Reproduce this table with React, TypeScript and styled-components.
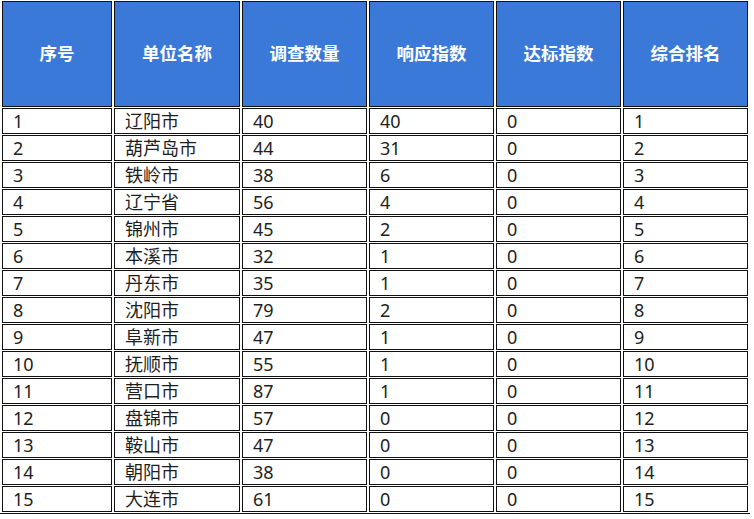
import React, { FC } from 'react';
import styled, { createGlobalStyle } from 'styled-components';

const GlobalStyle = createGlobalStyle`
  html, body {
    margin: 0;
    padding: 0;
    background: #fff;
  }
  body {
    font-family: "Noto Sans", "Noto Sans CJK SC", sans-serif;
  }
`;

const Table = styled.table`
  border-collapse: separate;
  border-spacing: 2px 1px;
  table-layout: fixed;
  width: 750px;
  border-bottom: 1px solid #111;
`;

const HeadCell = styled.th<{ $w: number }>`
  box-sizing: border-box;
  width: ${(p) => p.$w}px;
  height: 106px;
  padding: 0 0 3px;
  background: #3b79d8;
  border: 1px solid #111;
  color: #fff;
  font-family: "Noto Sans CJK SC", sans-serif;
  font-size: 17.5px;
  font-weight: 700;
  text-align: center;
  vertical-align: middle;
`;

const Cell = styled.td`
  box-sizing: border-box;
  height: 26px;
  padding: 0 10px;
  border: 1px solid #111;
  color: #1e1e1e;
  font-size: 18px;
  font-weight: 400;
  line-height: 24px;
  text-align: left;
  white-space: nowrap;
`;

const columns = [
  { title: '序号', width: 110 },
  { title: '单位名称', width: 126 },
  { title: '调查数量', width: 125 },
  { title: '响应指数', width: 125 },
  { title: '达标指数', width: 125 },
  { title: '综合排名', width: 125 },
];

const rows: [string, number, number, number][] = [
  ['辽阳市', 40, 40, 0],
  ['葫芦岛市', 44, 31, 0],
  ['铁岭市', 38, 6, 0],
  ['辽宁省', 56, 4, 0],
  ['锦州市', 45, 2, 0],
  ['本溪市', 32, 1, 0],
  ['丹东市', 35, 1, 0],
  ['沈阳市', 79, 2, 0],
  ['阜新市', 47, 1, 0],
  ['抚顺市', 55, 1, 0],
  ['营口市', 87, 1, 0],
  ['盘锦市', 57, 0, 0],
  ['鞍山市', 47, 0, 0],
  ['朝阳市', 38, 0, 0],
  ['大连市', 61, 0, 0],
];

const App: FC = () => (
  <>
    <GlobalStyle />
    <Table>
      <thead>
        <tr>
          {columns.map((c) => (
            <HeadCell key={c.title} $w={c.width}>
              {c.title}
            </HeadCell>
          ))}
        </tr>
      </thead>
      <tbody>
        {rows.map(([name, count, response, standard], i) => (
          <tr key={name}>
            <Cell>{i + 1}</Cell>
            <Cell>{name}</Cell>
            <Cell>{count}</Cell>
            <Cell>{response}</Cell>
            <Cell>{standard}</Cell>
            <Cell>{i + 1}</Cell>
          </tr>
        ))}
      </tbody>
    </Table>
  </>
);

export default App;
